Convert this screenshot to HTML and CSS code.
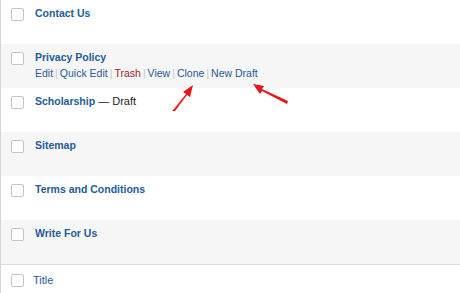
FILE: index.html
```html
<!DOCTYPE html>
<html lang="en">
  <head>
    <meta charset="UTF-8" />
    <title>Pages</title>
    <link rel="stylesheet" href="styles.css">
  </head>
  <body>
    <div class="list">
      <div class="row">
        <span class="check"></span>
        <div class="cell"><a class="title" href="#">Contact Us</a></div>
      </div>
      <div class="row alt">
        <span class="check"></span>
        <div class="cell">
          <a class="title" href="#">Privacy Policy</a>
          <div class="actions">
            <a href="#">Edit</a><span class="sep">|</span><a href="#">Quick Edit</a><span class="sep">|</span><a class="trash" href="#">Trash</a><span class="sep">|</span><a href="#">View</a><span class="sep">|</span><a href="#">Clone</a><span class="sep">|</span><a href="#">New Draft</a>
          </div>
        </div>
      </div>
      <div class="row">
        <span class="check"></span>
        <div class="cell"><a class="title" href="#">Scholarship</a><span class="state"> — Draft</span></div>
      </div>
      <div class="row alt">
        <span class="check"></span>
        <div class="cell"><a class="title" href="#">Sitemap</a></div>
      </div>
      <div class="row">
        <span class="check"></span>
        <div class="cell"><a class="title" href="#">Terms and Conditions</a></div>
      </div>
      <div class="row alt">
        <span class="check"></span>
        <div class="cell"><a class="title" href="#">Write For Us</a></div>
      </div>
      <div class="foot">
        <span class="check"></span>
        <a class="col" href="#">Title</a>
      </div>
    </div>

    <!-- annotation arrows -->
    <svg class="arrows" width="460" height="293" viewBox="0 0 460 293">
      <polygon points="172,111 174,109 186,94 183,92 193,85 190,97 187,95 175,111" fill="#e8141a"></polygon>
      <polygon points="288,101 287,104 262,91 260,94 253,84 264,86 262,89 288,101" fill="#e8141a"></polygon>
    </svg>
  </body>
</html>
```

FILE: styles.css
```css
body {
  margin: 0;
  font-family: "Liberation Sans", Arial, sans-serif;
  background-color: white;
  width: 460px;
  height: 293px;
  overflow: hidden;
  position: relative;
}
a {
  color: #245b99;
  text-decoration: none;
}
.list {
  border-left: 1px solid #d6d6d6;
}
.row {
  display: flex;
  height: 44px;
  box-sizing: border-box;
  padding-top: 8px;
}
.row.alt {
  background-color: #f6f6f6;
}
.check {
  display: block;
  width: 11px;
  height: 11px;
  border: 1px solid #c3c4c7;
  border-radius: 2px;
  background-color: white;
  margin-left: 10px;
  margin-right: 11px;
  flex-shrink: 0;
}
.cell {
  font-size: 10.5px;
  line-height: 14px;
  margin-top: -2px;
}
.title {
  font-weight: bold;
}
.state {
  color: #1d2327;
  font-size: 11px;
}
.actions {
  margin-top: 2px;
  font-size: 10.5px;
  line-height: 14px;
}
.sep {
  color: #c8c8c8;
  margin: 0 2px;
}
.trash {
  color: #a3242a;
}
.foot {
  display: flex;
  align-items: center;
  height: 28px;
  border-top: 1px solid #dcdcde;
  padding-top: 1px;
}
.foot .col {
  font-size: 11px;
  margin-left: -2px;
}
.arrows {
  position: absolute;
  left: 0;
  top: 0;
}
```
